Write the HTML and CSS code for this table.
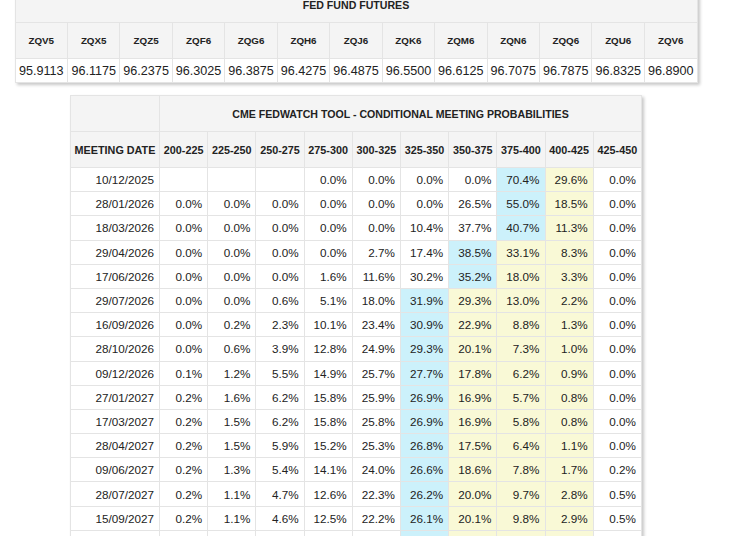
FILE: index.html
```html
<!DOCTYPE html>
<html lang="en">
<head>
<meta charset="utf-8">
<title>Fed Fund Futures</title>
<link rel="stylesheet" href="styles.css">
</head>
<body>
<div class="page">
  <table class="futures">
    <tr class="title-row"><th colspan="13">FED FUND FUTURES</th></tr>
    <tr class="head-row">
      <th>ZQV5</th><th>ZQX5</th><th>ZQZ5</th><th>ZQF6</th><th>ZQG6</th><th>ZQH6</th><th>ZQJ6</th><th>ZQK6</th><th>ZQM6</th><th>ZQN6</th><th>ZQQ6</th><th>ZQU6</th><th>ZQV6</th>
    </tr>
    <tr class="val-row">
      <td>95.9113</td><td>96.1175</td><td>96.2375</td><td>96.3025</td><td>96.3875</td><td>96.4275</td><td>96.4875</td><td>96.5500</td><td>96.6125</td><td>96.7075</td><td>96.7875</td><td>96.8325</td><td>96.8900</td>
    </tr>
  </table>

  <table class="fedwatch">
    <colgroup><col class="date-col"><col span="10"></colgroup>
    <tr class="title-row"><th></th><th colspan="10">CME FEDWATCH TOOL - CONDITIONAL MEETING PROBABILITIES</th></tr>
    <tr class="head-row">
      <th>MEETING DATE</th><th>200-225</th><th>225-250</th><th>250-275</th><th>275-300</th><th>300-325</th><th>325-350</th><th>350-375</th><th>375-400</th><th>400-425</th><th>425-450</th>
    </tr>
    <tr><td>10/12/2025</td><td></td><td></td><td></td><td>0.0%</td><td>0.0%</td><td>0.0%</td><td>0.0%</td><td class="max">70.4%</td><td class="mid">29.6%</td><td>0.0%</td></tr>
    <tr><td>28/01/2026</td><td>0.0%</td><td>0.0%</td><td>0.0%</td><td>0.0%</td><td>0.0%</td><td>0.0%</td><td>26.5%</td><td class="max">55.0%</td><td class="mid">18.5%</td><td>0.0%</td></tr>
    <tr><td>18/03/2026</td><td>0.0%</td><td>0.0%</td><td>0.0%</td><td>0.0%</td><td>0.0%</td><td>10.4%</td><td>37.7%</td><td class="max">40.7%</td><td class="mid">11.3%</td><td>0.0%</td></tr>
    <tr><td>29/04/2026</td><td>0.0%</td><td>0.0%</td><td>0.0%</td><td>0.0%</td><td>2.7%</td><td>17.4%</td><td class="max">38.5%</td><td class="mid">33.1%</td><td class="mid">8.3%</td><td>0.0%</td></tr>
    <tr><td>17/06/2026</td><td>0.0%</td><td>0.0%</td><td>0.0%</td><td>1.6%</td><td>11.6%</td><td>30.2%</td><td class="max">35.2%</td><td class="mid">18.0%</td><td class="mid">3.3%</td><td>0.0%</td></tr>
    <tr><td>29/07/2026</td><td>0.0%</td><td>0.0%</td><td>0.6%</td><td>5.1%</td><td>18.0%</td><td class="max">31.9%</td><td class="mid">29.3%</td><td class="mid">13.0%</td><td class="mid">2.2%</td><td>0.0%</td></tr>
    <tr><td>16/09/2026</td><td>0.0%</td><td>0.2%</td><td>2.3%</td><td>10.1%</td><td>23.4%</td><td class="max">30.9%</td><td class="mid">22.9%</td><td class="mid">8.8%</td><td class="mid">1.3%</td><td>0.0%</td></tr>
    <tr><td>28/10/2026</td><td>0.0%</td><td>0.6%</td><td>3.9%</td><td>12.8%</td><td>24.9%</td><td class="max">29.3%</td><td class="mid">20.1%</td><td class="mid">7.3%</td><td class="mid">1.0%</td><td>0.0%</td></tr>
    <tr><td>09/12/2026</td><td>0.1%</td><td>1.2%</td><td>5.5%</td><td>14.9%</td><td>25.7%</td><td class="max">27.7%</td><td class="mid">17.8%</td><td class="mid">6.2%</td><td class="mid">0.9%</td><td>0.0%</td></tr>
    <tr><td>27/01/2027</td><td>0.2%</td><td>1.6%</td><td>6.2%</td><td>15.8%</td><td>25.9%</td><td class="max">26.9%</td><td class="mid">16.9%</td><td class="mid">5.7%</td><td class="mid">0.8%</td><td>0.0%</td></tr>
    <tr><td>17/03/2027</td><td>0.2%</td><td>1.5%</td><td>6.2%</td><td>15.8%</td><td>25.8%</td><td class="max">26.9%</td><td class="mid">16.9%</td><td class="mid">5.8%</td><td class="mid">0.8%</td><td>0.0%</td></tr>
    <tr><td>28/04/2027</td><td>0.2%</td><td>1.5%</td><td>5.9%</td><td>15.2%</td><td>25.3%</td><td class="max">26.8%</td><td class="mid">17.5%</td><td class="mid">6.4%</td><td class="mid">1.1%</td><td>0.0%</td></tr>
    <tr><td>09/06/2027</td><td>0.2%</td><td>1.3%</td><td>5.4%</td><td>14.1%</td><td>24.0%</td><td class="max">26.6%</td><td class="mid">18.6%</td><td class="mid">7.8%</td><td class="mid">1.7%</td><td>0.2%</td></tr>
    <tr><td>28/07/2027</td><td>0.2%</td><td>1.1%</td><td>4.7%</td><td>12.6%</td><td>22.3%</td><td class="max">26.2%</td><td class="mid">20.0%</td><td class="mid">9.7%</td><td class="mid">2.8%</td><td>0.5%</td></tr>
    <tr><td>15/09/2027</td><td>0.2%</td><td>1.1%</td><td>4.6%</td><td>12.5%</td><td>22.2%</td><td class="max">26.1%</td><td class="mid">20.1%</td><td class="mid">9.8%</td><td class="mid">2.9%</td><td>0.5%</td></tr>
    <tr><td>27/10/2027</td><td>0.2%</td><td>1.1%</td><td>4.5%</td><td>12.3%</td><td>22.0%</td><td class="max">26.0%</td><td class="mid">20.2%</td><td class="mid">10.0%</td><td class="mid">3.1%</td><td>0.6%</td></tr>
  </table>
</div>
</body>
</html>
```

FILE: styles.css
```css
html, body {
  margin: 0;
  padding: 0;
  background: #ffffff;
  overflow: hidden;
}

body {
  font-family: "Liberation Sans", Arial, Helvetica, sans-serif;
  color: #222222;
}

.page {
  width: 712px;
  display: flex;
  flex-direction: column;
  align-items: center;
  gap: 12px;
  margin-top: -14px;
}

table {
  border-collapse: collapse;
  table-layout: fixed;
  background: #ffffff;
  box-shadow: 2px 2px 3px rgba(0, 0, 0, 0.22);
}

th, td {
  border: 1px solid #e4e4e4;
  padding: 0;
  white-space: nowrap;
}

th {
  background: #f4f4f4;
  font-weight: bold;
  text-align: center;
}

/* Fed fund futures */
.futures {
  width: 683px;
}

.futures .title-row th {
  height: 35px;
  font-size: 10.6px;
}

.futures .head-row th {
  height: 35px;
  font-size: 9.8px;
}

.futures td {
  height: 23px;
  font-size: 12.6px;
  text-align: center;
}

/* FedWatch table */
.fedwatch {
  width: 572px;
}

.fedwatch .date-col {
  width: 89px;
}

.fedwatch .title-row th {
  height: 35px;
  font-size: 10.6px;
}

.fedwatch .head-row th {
  height: 35px;
  font-size: 10.8px;
}

.fedwatch td {
  height: 23.2px;
  font-size: 11.7px;
  text-align: right;
  padding-right: 5px;
}

.fedwatch td.max {
  background: #ccf1fb;
}

.fedwatch td.mid {
  background: #f9f9d6;
}
```
